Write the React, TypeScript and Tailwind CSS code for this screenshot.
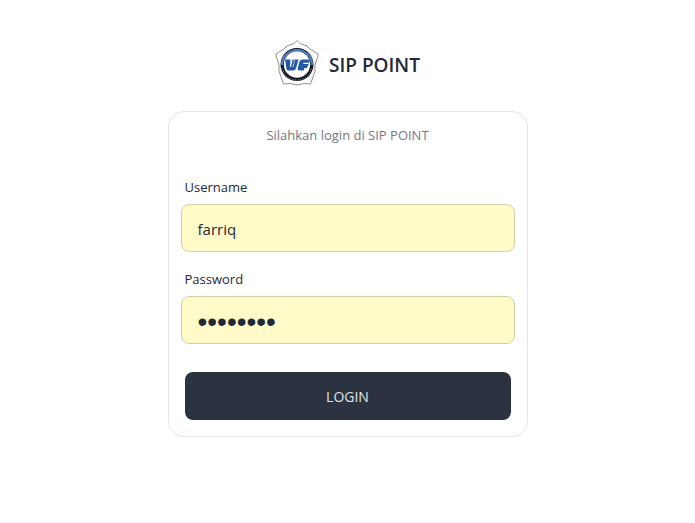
import { useState } from "react";

function Logo() {
  return (
    <svg viewBox="0 0 44 46" className="h-[46px] w-11 shrink-0" role="img" aria-label="Logo">
      <path
        d="M22 0.500 L25 3.500 L32 6 L35 9 L43 14 Q43.500 17 41.500 20 Q39 26 40 31 Q38 37 35.500 44 Q29 42.500 22 45 Q15 42.500 8.500 44 Q6 37 4 31 Q5 26 2.500 20 Q0.500 17 1 14 L9 9 L12 6 L19 3.500 Z"
        fill="#fdfdfd"
        stroke="#858585"
        strokeWidth="0.9"
      />
      <circle cx="22" cy="24.5" r="16.500" fill="#10151f" />
      <path d="M7 25 A15 15 0 0 1 37 25" fill="none" stroke="#4f7fc4" strokeWidth="2.200" />
      <path
        d="M7.300 28 A15 15 0 0 0 36.700 28"
        fill="none"
        stroke="#b8bcc2"
        strokeWidth="1"
        strokeDasharray="1 1.600"
      />
      <circle cx="22" cy="24.500" r="13.200" fill="#fff" />
      <path
        d="M10 19.500 H15.500 L15 27 H16 L17.500 19.500 H23.500 L21 28.500 Q20.200 30.500 18 30.500 H13.500 Q11.300 30.500 11.300 28 Z"
        fill="#2459a6"
      />
      <path d="M19.500 19.500 L18 27" fill="none" stroke="#fff" strokeWidth="0.6" />
      <path
        d="M27 19.500 H35 L34.200 22.800 H28.500 L28.200 24 H33.800 L31.800 28 H29.500 L28.800 30.500 H24.500 Q22.300 30.500 22.800 28 L24.300 22 Q25 19.500 27 19.500 Z"
        fill="#2459a6"
      />
    </svg>
  );
}

const fieldClass =
  "-mx-1 block h-12 rounded-lg border border-[#d0d0a8] bg-[#fffbc8] px-4 text-[#1f2937] outline-none";

export default function App() {
  const [username, setUsername] = useState("farriq");
  const [password, setPassword] = useState("password");

  return (
    <main className="flex min-h-screen flex-col items-center bg-white px-4 py-10 font-['Open_Sans','Noto_Sans',sans-serif] text-[#1f2937]">
      <header className="mb-[25px] flex items-center gap-2.5">
        <Logo />
        <h1 className="pt-1 text-[19px] leading-7 font-semibold">SIP POINT</h1>
      </header>
      <form
        onSubmit={(event) => event.preventDefault()}
        className="flex w-full max-w-[360px] flex-col rounded-2xl border border-[#e5e6e6] px-4 pt-3 pb-4"
      >
        <p className="mb-[30px] text-center text-[13px] leading-[22px] text-[#747981]">Silahkan login di SIP POINT</p>
        <label htmlFor="username" className="mb-1.5 text-[13px] leading-[22px]">
          Username
        </label>
        <input
          id="username"
          type="text"
          value={username}
          onChange={(event) => setUsername(event.target.value)}
          className={`${fieldClass} pt-0.5 text-[15px]`}
        />
        <label htmlFor="password" className="mt-4 mb-1.5 text-[13px] leading-[22px]">
          Password
        </label>
        <input
          id="password"
          type="password"
          value={password}
          onChange={(event) => setPassword(event.target.value)}
          className={`${fieldClass} pt-1 font-['Liberation_Sans',sans-serif] text-[28px]`}
        />
        <button type="submit" className="mt-7 h-12 rounded-lg bg-[#2c3340] pt-0.5 text-sm text-[#dfe3e8]">
          LOGIN
        </button>
      </form>
    </main>
  );
}
